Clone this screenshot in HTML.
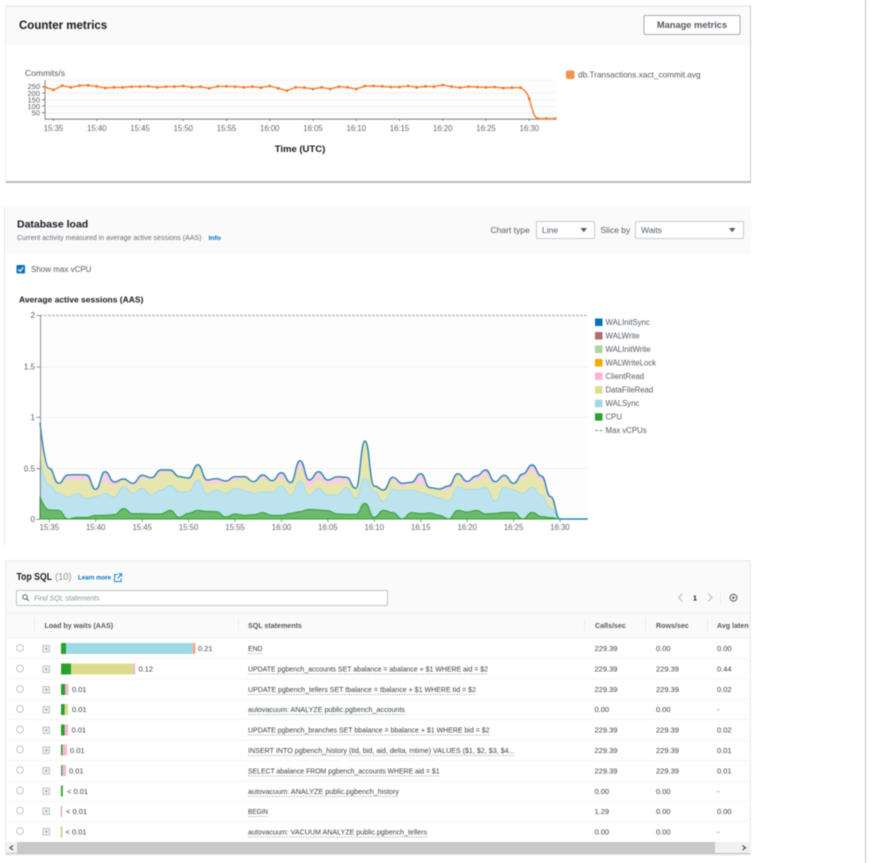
<!DOCTYPE html>
<html lang="en"><head><meta charset="utf-8"><title>Performance Insights</title>
<style>
html,body{margin:0;padding:0;background:#fff;width:869px;height:863px;overflow:hidden}
svg{display:block;position:absolute;left:0;top:0;filter:blur(.42px)}
text{font-family:"Liberation Sans",sans-serif;fill:#545b64;font-size:8px}
.b{font-weight:700;fill:#16191f}
.a{font-size:7.8px;text-anchor:middle;fill:#5f666e}
.l{font-size:7.8px;fill:#545b64}
.h{font-size:7.1px;font-weight:700;fill:#545b64}
.r{font-size:7.5px;fill:#3b4148}
.v{font-size:7.5px;fill:#3b4148}
.d{stroke:#879596;stroke-width:.7;stroke-dasharray:1.2 1.2}
.n{vector-effect:non-scaling-stroke}
</style></head><body>
<svg width="869" height="863" viewBox="0 0 869 863" xmlns="http://www.w3.org/2000/svg">
<defs><clipPath id="c"><rect x="700" y="615" width="49" height="20"/></clipPath></defs>
<rect x="865" y="0" width="1" height="863" fill="#c4c4c4"/>

<!-- Counter metrics -->
<rect x="5" y="5" width="746" height="178" fill="#eee"/>
<rect x="6" y="7" width="744" height="174" fill="#fff"/>
<rect x="6" y="7" width="744" height="38" fill="#fafafa"/>
<rect x="6" y="181" width="745" height="2" fill="#b4bcbf"/>
<rect x="750" y="6" width="1" height="176" fill="#c9cdcf"/>
<text x="19" y="29" class="b" style="font-size:11.5px">Counter metrics</text>
<rect x="644" y="15.500" width="96" height="19" rx="1" fill="#fff" stroke="#a3aeb4"/>
<text x="692" y="28" text-anchor="middle" style="font-size:9.300px;font-weight:700;fill:#545b64">Manage metrics</text>
<text x="25" y="76" style="font-size:8.500px;fill:#545b64">Commits/s</text>
<rect x="46" y="80" width="510" height="39" fill="#fdfdfd"/>
<g stroke="#efefef" stroke-width=".8"><path d="M46 80H555M46 93H555M46 100H555M46 106.500H555M46 113H555"/></g>
<g stroke="#666" stroke-width=".8"><path d="M45 80V119.500M45 119.200H556M42 86.500H45M42 93H45M42 99.700H45M42 106H45M42 112.700H45"/>
<path d="M53.500 119V121M96.750 119V121M140 119V121M183.250 119V121M226.500 119V121M269.750 119V121M313 119V121M356.250 119V121M399.500 119V121M442.750 119V121M486 119V121M529.250 119V121"/></g>
<g style="font-size:7.500px" text-anchor="end"><text x="40" y="89.200" style="font-size:7.500px">250</text><text x="40" y="95.800" style="font-size:7.500px">200</text><text x="40" y="102.400" style="font-size:7.500px">150</text><text x="40" y="108.800" style="font-size:7.500px">100</text><text x="40" y="115.400" style="font-size:7.500px">50</text></g>
<g><text class="a" x="53.500" y="131">15:35</text><text class="a" x="96.750" y="131">15:40</text><text class="a" x="140" y="131">15:45</text><text class="a" x="183.250" y="131">15:50</text><text class="a" x="226.500" y="131">15:55</text><text class="a" x="269.750" y="131">16:00</text><text class="a" x="313" y="131">16:05</text><text class="a" x="356.250" y="131">16:10</text><text class="a" x="399.500" y="131">16:15</text><text class="a" x="442.750" y="131">16:20</text><text class="a" x="486" y="131">16:25</text><text class="a" x="529.250" y="131">16:30</text></g>
<text x="300" y="152" text-anchor="middle" class="b" style="font-size:9.500px">Time (UTC)</text>
<g transform="translate(44.800,0) scale(8.650,.33333)">
<path class="n" fill="none" stroke="#f58536" stroke-width="1.500" d="M0,261L1,270 2,257 3,262 4,257 5,256 6,259 7,264 8,262 9,262 10,260 11,260 12,259 13,262 14,260 15,260 16,258 17,262 18,260 19,265 20,259 21,259 22,260 23,262 24,260 25,263 26,258 27,265 28,272 29,262 30,263 31,267 32,262 33,267 34,260 35,262 36,267 37,258 38,258 39,259 40,261 41,261 42,258 43,262 44,259 45,260 46,255 47,260 48,263 49,260 50,261 51,262 52,261 53,264 54,263 55,263 S55.700,270 56,296 56.500,352 57,356 L58,356 59,356"/>
<path class="n" fill="none" stroke="#f5792a" stroke-width="2.800" stroke-linecap="round" d="M0,261h0M1,270h0M2,257h0M3,262h0M4,257h0M5,256h0M6,259h0M7,264h0M8,262h0M9,262h0M10,260h0M11,260h0M12,259h0M13,262h0M14,260h0M15,260h0M16,258h0M17,262h0M18,260h0M19,265h0M20,259h0M21,259h0M22,260h0M23,262h0M24,260h0M25,263h0M26,258h0M27,265h0M28,272h0M29,262h0M30,263h0M31,267h0M32,262h0M33,267h0M34,260h0M35,262h0M36,267h0M37,258h0M38,258h0M39,259h0M40,261h0M41,261h0M42,258h0M43,262h0M44,259h0M45,260h0M46,255h0M47,260h0M48,263h0M49,260h0M50,261h0M51,262h0M52,261h0M53,264h0M54,263h0M55,263h0M56,296h0M57,356h0M58,356h0M59,356h0"/>
</g>
<rect x="566" y="70.500" width="8.500" height="8.500" rx="2" fill="#f4914f"/>
<text x="578" y="77.500" style="font-size:8.250px">db.Transactions.xact_commit.avg</text>

<!-- Database load -->
<rect x="4" y="207" width="1.300" height="338" fill="#e9ebec"/>
<rect x="5.500" y="207" width="745.500" height="47" fill="#fafafa"/>
<text x="17" y="227.500" class="b" style="font-size:10.500px">Database load</text>
<text x="17" y="240" style="font-size:7px;fill:#687078">Current activity measured in average active sessions (AAS)</text>
<text x="208.500" y="240" style="font-size:6.800px;font-weight:700;fill:#0073bb">Info</text>
<text x="490.500" y="233" style="font-size:8.500px">Chart type</text>
<rect x="536.500" y="221.500" width="58" height="17" rx="1" fill="#fff" stroke="#c5cdd0"/>
<text x="542" y="233" style="font-size:8.500px">Line</text>
<path d="M580.500 228H587L583.750 232.300Z" fill="#545b64"/>
<text x="600.500" y="233" style="font-size:8.500px">Slice by</text>
<rect x="635.500" y="221.500" width="108" height="17" rx="1" fill="#fff" stroke="#c5cdd0"/>
<text x="641" y="233" style="font-size:8.500px">Waits</text>
<path d="M729 228H735.500L732.250 232.300Z" fill="#545b64"/>
<rect x="16.500" y="265" width="8.500" height="8.500" rx="1" fill="#0b73b8"/>
<path d="M18.300 269.300L20.200 271.300L23.200 267.300" fill="none" stroke="#fff" stroke-width="1.200"/>
<text x="31" y="272" style="font-size:8px">Show max vCPU</text>
<text x="19" y="302.500" class="b" style="font-size:8.500px">Average active sessions (AAS)</text>

<rect x="41" y="316" width="547" height="203" fill="#fdfdfd"/>
<path d="M41 367H588M41 417.300H588M41 468.700H588" stroke="#f0f0f0" stroke-width=".8"/>
<g transform="translate(40,400) scale(9.285,.33333)">
<path fill="#f9cfe2" d="M0,357L0,68S.5,205 1,205 1.500,250 2,250 2.500,225 3,225 3.500,224 4,224 4.500,225 5,225 5.500,268 6,268 6.500,215 7,215 7.500,246 8,246 8.500,237 9,237 9.500,250 10,250 10.500,226 11,226 11.500,233 12,233 12.500,210 13,210 13.500,210 14,210 14.500,230 15,230 15.500,234 16,234 16.500,194 17,194 17.500,240 18,240 18.500,236 19,236 19.500,243 20,243 20.500,230 21,230 21.500,230 22,230 22.500,245 23,245 23.500,225 24,225 24.500,242 25,242 25.500,218 26,218 26.500,248 27,248 27.500,182 28,182 28.500,240 29,240 29.500,215 30,215 30.500,240 31,240 31.500,230 32,230 32.500,232 33,232 33.500,265 34,265 34.500,123 35,123 35.500,258 36,258 36.500,270 37,270 37.500,232 38,232 38.500,250 39,250 39.500,247 40,247 40.500,221 41,221 41.500,263 42,263 42.500,267 43,267 43.500,258 44,258 44.500,221 45,221 45.500,244 46,244 46.500,228 47,228 47.500,210 48,210 48.500,245 49,245 49.500,226 50,226 50.500,250 51,250 51.500,222 52,222 52.500,195 53,195 53.500,228 54,228 54.500,290 55,290 55.500,357 56,357Z"/>
<path fill="#e7e6ae" d="M0,357L0,100S.5,210 1,210 1.500,250 2,250 2.500,240 3,240 3.500,240 4,240 4.500,240 5,240 5.500,268 6,268 6.500,245 7,245 7.500,258 8,258 8.500,240 9,240 9.500,258 10,258 10.500,235 11,235 11.500,238 12,238 12.500,218 13,218 13.500,215 14,215 14.500,230 15,230 15.500,235 16,235 16.500,200 17,200 17.500,250 18,250 18.500,250 19,250 19.500,248 20,248 20.500,240 21,240 21.500,233 22,233 22.500,245 23,245 23.500,235 24,235 24.500,245 25,245 25.500,235 26,235 26.500,250 27,250 27.500,205 28,205 28.500,265 29,265 29.500,240 30,240 30.500,255 31,255 31.500,250 32,250 32.500,245 33,245 33.500,265 34,265 34.500,123 35,123 35.500,262 36,262 36.500,272 37,272 37.500,240 38,240 38.500,263 39,263 39.500,250 40,250 40.500,255 41,255 41.500,265 42,265 42.500,270 43,270 43.500,272 44,272 44.500,225 45,225 45.500,255 46,255 46.500,240 47,240 47.500,230 48,230 48.500,250 49,250 49.500,235 50,235 50.500,250 51,250 51.500,235 52,235 52.500,215 53,215 53.500,240 54,240 54.500,300 55,300 55.500,357 56,357Z"/>
<path fill="#bde3ee" stroke="#a9dbe8" stroke-width="1" class="n" d="M0,357L0,180S.5,255 1,255 1.500,280 2,280 2.500,292 3,292 3.500,282 4,282 4.500,295 5,295 5.500,290 6,290 6.500,280 7,280 7.500,292 8,292 8.500,260 9,260 9.500,280 10,280 10.500,265 11,265 11.500,285 12,285 12.500,270 13,270 13.500,256 14,256 14.500,276 15,276 15.500,275 16,275 16.500,240 17,240 17.500,282 18,282 18.500,270 19,270 19.500,280 20,280 20.500,265 21,265 21.500,272 22,272 22.500,280 23,280 23.500,276 24,276 24.500,276 25,276 25.500,258 26,258 26.500,285 27,285 27.500,243 28,243 28.500,285 29,285 29.500,265 30,265 30.500,285 31,285 31.500,285 32,285 32.500,262 33,262 33.500,295 34,295 34.500,235 35,235 35.500,275 36,275 36.500,305 37,305 37.500,268 38,268 38.500,272 39,272 39.500,270 40,270 40.500,278 41,278 41.500,285 42,285 42.500,295 43,295 43.500,303 44,303 44.500,260 45,260 45.500,268 46,268 46.500,268 47,268 47.500,262 48,262 48.500,303 49,303 49.500,262 50,262 50.500,270 51,270 51.500,280 52,280 52.500,262 53,262 53.500,285 54,285 54.500,325 55,325 55.500,357 56,357Z"/>
<path fill="#6cb96c" stroke="#2ca02c" stroke-width="1" class="n" d="M0,357L0,290S.5,330 1,330 1.500,331 2,331 2.500,357 3,357 3.500,352 4,352 4.500,352 5,352 5.500,346 6,346 6.500,346 7,346 7.500,344 8,344 8.500,326 9,326 9.500,341 10,341 10.500,341 11,341 11.500,342 12,342 12.500,342 13,342 13.500,331 14,331 14.500,352 15,352 15.500,340 16,340 16.500,331 17,331 17.500,334 18,334 18.500,335 19,335 19.500,351 20,351 20.500,342 21,342 21.500,346 22,346 22.500,344 23,344 23.500,338 24,338 24.500,346 25,346 25.500,346 26,346 26.500,340 27,340 27.500,335 28,335 28.500,328 29,328 29.500,330 30,330 30.500,332 31,332 31.500,342 32,342 32.500,343 33,343 33.500,343 34,343 34.500,310 35,310 35.500,352 36,352 36.500,331 37,331 37.500,338 38,338 38.500,357 39,357 39.500,338 40,338 40.500,341 41,341 41.500,339 42,339 42.500,346 43,346 43.500,357 44,357 44.500,331 45,331 45.500,336 46,336 46.500,331 47,331 47.500,342 48,342 48.500,340 49,340 49.500,337 50,337 50.500,337 51,337 51.500,357 52,357 52.500,337 53,337 53.500,350 54,350 54.500,353 55,353 55.500,357 56,357Z"/>
<path fill="none" stroke="#2c85b8" stroke-width="1.400" class="n" d="M0,68S.5,205 1,205 1.500,250 2,250 2.500,225 3,225 3.500,224 4,224 4.500,225 5,225 5.500,268 6,268 6.500,215 7,215 7.500,246 8,246 8.500,237 9,237 9.500,250 10,250 10.500,226 11,226 11.500,233 12,233 12.500,210 13,210 13.500,210 14,210 14.500,230 15,230 15.500,234 16,234 16.500,194 17,194 17.500,240 18,240 18.500,236 19,236 19.500,243 20,243 20.500,230 21,230 21.500,230 22,230 22.500,245 23,245 23.500,225 24,225 24.500,242 25,242 25.500,218 26,218 26.500,248 27,248 27.500,182 28,182 28.500,240 29,240 29.500,215 30,215 30.500,240 31,240 31.500,230 32,230 32.500,232 33,232 33.500,265 34,265 34.500,123 35,123 35.500,258 36,258 36.500,270 37,270 37.500,232 38,232 38.500,250 39,250 39.500,247 40,247 40.500,221 41,221 41.500,263 42,263 42.500,267 43,267 43.500,258 44,258 44.500,221 45,221 45.500,244 46,244 46.500,228 47,228 47.500,210 48,210 48.500,245 49,245 49.500,226 50,226 50.500,250 51,250 51.500,222 52,222 52.500,195 53,195 53.500,228 54,228 54.500,290 55,290 55.500,357 56,357L59,357"/>
</g>
<path d="M40 315.500H588" stroke="#808080" stroke-width=".8" stroke-dasharray="2.500 1.500"/>
<g stroke="#777" stroke-width=".8" fill="none"><path d="M40.500 315V519.500M36.500 315.500H40.500M36.500 367H40.500M36.500 417.300H40.500M36.500 468.700H40.500M36.500 519.300H40.500"/>
<path d="M49.300 519V522M95.700 519V522M142.200 519V522M188.600 519V522M235 519V522M281.500 519V522M327.900 519V522M374.300 519V522M420.800 519V522M467.200 519V522M513.600 519V522M560 519V522"/></g>
<g text-anchor="end"><text x="35" y="318">2</text><text x="35" y="369.500">1.5</text><text x="35" y="420">1</text><text x="35" y="471.500">0.5</text><text x="35" y="522">0</text></g>
<g><text class="a" x="49.300" y="530">15:35</text><text class="a" x="95.700" y="530">15:40</text><text class="a" x="142.200" y="530">15:45</text><text class="a" x="188.600" y="530">15:50</text><text class="a" x="235" y="530">15:55</text><text class="a" x="281.500" y="530">16:00</text><text class="a" x="327.900" y="530">16:05</text><text class="a" x="374.300" y="530">16:10</text><text class="a" x="420.800" y="530">16:15</text><text class="a" x="467.200" y="530">16:20</text><text class="a" x="513.600" y="530">16:25</text><text class="a" x="560" y="530">16:30</text></g>
<g>
<rect x="595" y="318.500" width="7.500" height="7.500" fill="#0073bb"/><text class="l" x="605.500" y="325">WALInitSync</text>
<rect x="595" y="332" width="7.500" height="7.500" fill="#b56a6f"/><text class="l" x="605.500" y="338.500">WALWrite</text>
<rect x="595" y="345.500" width="7.500" height="7.500" fill="#a8d5a0"/><text class="l" x="605.500" y="352">WALInitWrite</text>
<rect x="595" y="359" width="7.500" height="7.500" fill="#f2a900"/><text class="l" x="605.500" y="365.500">WALWriteLock</text>
<rect x="595" y="372.600" width="7.500" height="7.500" fill="#f9b5d2"/><text class="l" x="605.500" y="379">ClientRead</text>
<rect x="595" y="386.100" width="7.500" height="7.500" fill="#dcdc8f"/><text class="l" x="605.500" y="392.600">DataFileRead</text>
<rect x="595" y="399.700" width="7.500" height="7.500" fill="#9fd8e6"/><text class="l" x="605.500" y="406.100">WALSync</text>
<rect x="595" y="413.200" width="7.500" height="7.500" fill="#2ca02c"/><text class="l" x="605.500" y="419.700">CPU</text>
<path d="M595 430.500H603" stroke="#666" stroke-width=".8" stroke-dasharray="3 1.500"/><text class="l" x="605.500" y="433">Max vCPUs</text>
</g>

<!-- Top SQL -->
<rect x="5" y="560" width="746" height="295.500" fill="#eee"/>
<rect x="6.500" y="561.500" width="743" height="76.500" fill="#fafafa"/>
<rect x="6.500" y="638" width="743" height="204" fill="#fff"/>
<text x="16.500" y="580" class="b" style="font-size:10.300px" textLength="35.500" lengthAdjust="spacingAndGlyphs">Top SQL</text>
<text x="55" y="580" style="font-size:10.300px;fill:#879596" textLength="16.500" lengthAdjust="spacingAndGlyphs">(10)</text>
<text x="78" y="579.500" style="font-size:6px;font-weight:700;fill:#0073bb" textLength="33" lengthAdjust="spacingAndGlyphs">Learn more</text>
<path d="M117.500 574.500H114.500V581.500H121V578.500M117.500 578.500L121 574.500M118.500 573.800H121.500V576.800" fill="none" stroke="#1a86c8" stroke-width="1"/>
<rect x="16.500" y="590.500" width="371" height="15" rx="1" fill="#fff" stroke="#aab7b8" stroke-width=".8"/>
<circle cx="25" cy="597" r="2.200" fill="none" stroke="#545b64"/><path d="M26.600 598.600L28.800 601" stroke="#545b64"/>
<text x="34" y="600.500" style="font-size:7px;font-style:italic;fill:#879596">Find SQL statements</text>
<path d="M682.500 593.500L678.500 597.500L682.500 601.500M708 593.500L712 597.500L708 601.500" fill="none" stroke="#aab7b8" stroke-width=".9"/>
<text x="695" y="600.500" text-anchor="middle" class="b" style="font-size:7.500px">1</text>
<path d="M720.500 591V604" stroke="#eaeded"/>
<circle cx="733.500" cy="597.700" r="3.400" fill="none" stroke="#545b64" stroke-width="1"/><circle cx="733.500" cy="597.700" r="1.200" fill="#545b64"/>
<path d="M6.500 613H749.500M6.500 638H749.500" stroke="#eef0f0" stroke-width=".8"/>
<path d="M34.500 618V632M238.500 618V632M584.500 618V632M645.500 618V632M707.500 618V632" stroke="#e8eaea" stroke-width=".8"/>
<text class="h" x="44.500" y="628">Load by waits (AAS)</text><text class="h" x="248" y="628">SQL statements</text><text class="h" x="595" y="628">Calls/sec</text><text class="h" x="656" y="628">Rows/sec</text>
<g clip-path="url(#c)"><text class="h" x="717" y="628">Avg latency</text></g>
<path d="M6.500 658.500H749.500M6.500 679H749.500M6.500 699.500H749.500M6.500 719.500H749.500M6.500 740.500H749.500M6.500 760.500H749.500M6.500 781H749.500M6.500 801.500H749.500M6.500 821.500H749.500" stroke="#f0f1f1" stroke-width=".8"/>
<g fill="#fff" stroke="#aab7b8" stroke-width=".8">
<circle cx="20" cy="648" r="3.400"/><circle cx="20" cy="668.500" r="3.400"/><circle cx="20" cy="689" r="3.400"/><circle cx="20" cy="709" r="3.400"/><circle cx="20" cy="729.500" r="3.400"/><circle cx="20" cy="749.500" r="3.400"/><circle cx="20" cy="770" r="3.400"/><circle cx="20" cy="790.500" r="3.400"/><circle cx="20" cy="810.500" r="3.400"/><circle cx="20" cy="831" r="3.400"/></g>
<g fill="#f2f3f3" stroke="#aab7b8" stroke-width=".8">
<rect x="43" y="645.500" width="6.500" height="6.500"/><rect x="43" y="666" width="6.500" height="6.500"/><rect x="43" y="686.500" width="6.500" height="6.500"/><rect x="43" y="706.500" width="6.500" height="6.500"/><rect x="43" y="727" width="6.500" height="6.500"/><rect x="43" y="747" width="6.500" height="6.500"/><rect x="43" y="767.500" width="6.500" height="6.500"/><rect x="43" y="788" width="6.500" height="6.500"/><rect x="43" y="808" width="6.500" height="6.500"/><rect x="43" y="828.500" width="6.500" height="6.500"/></g>
<path d="M44.800 648.700H47.800M46.300 647.200V650.200M44.800 669.200H47.800M46.300 667.700V670.700M44.800 689.700H47.800M46.300 688.200V691.200M44.800 709.700H47.800M46.300 708.200V711.200M44.800 730.200H47.800M46.300 728.700V731.700M44.800 750.200H47.800M46.300 748.700V751.700M44.800 770.700H47.800M46.300 769.200V772.200M44.800 791.200H47.800M46.300 789.700V792.700M44.800 811.200H47.800M46.300 809.700V812.700M44.800 831.700H47.800M46.300 830.200V833.200" stroke="#879596" stroke-width=".7"/>
<!-- bars -->
<rect x="61" y="643" width="5" height="11" fill="#2ca02c"/><rect x="66" y="643" width="126" height="11" fill="#9fd8e6"/><rect x="192" y="643" width="1.500" height="11" fill="#f9b5d2"/><rect x="193.500" y="643" width="1.800" height="11" fill="#e8a868"/>
<rect x="61" y="663.500" width="10" height="11" fill="#2ca02c"/><rect x="71" y="663.500" width="62" height="11" fill="#dcdc8f"/><rect x="133" y="663.500" width="2.200" height="11" fill="#f9b5d2"/>
<rect x="61" y="684" width="4.300" height="11" fill="#2ca02c"/><rect x="65.300" y="684" width="3.300" height="11" fill="#f9b5d2"/>
<rect x="61" y="704" width="3.800" height="11" fill="#2ca02c"/><rect x="64.800" y="704" width="3.300" height="11" fill="#dcdc8f"/>
<rect x="61" y="724.500" width="3.800" height="11" fill="#2ca02c"/><rect x="64.800" y="724.500" width="3.400" height="11" fill="#f9b5d2"/>
<rect x="61" y="744.500" width="1.700" height="11" fill="#2ca02c"/><rect x="62.700" y="744.500" width="4.300" height="11" fill="#f9b5d2"/>
<rect x="61" y="765" width="1.500" height="11" fill="#5aa86a"/><rect x="62.500" y="765" width="3.500" height="11" fill="#f2b4cf"/>
<rect x="61" y="785.500" width="1.800" height="11" fill="#2ca02c"/>
<rect x="61" y="806" width="1" height="11" fill="#c09a9c"/>
<rect x="61" y="826.500" width="1" height="11" fill="#a8ad50"/>
<g>
<text class="v" x="198" y="651">0.21</text><text class="v" x="138.500" y="671.500">0.12</text><text class="v" x="72" y="692">0.01</text><text class="v" x="72" y="712">0.01</text><text class="v" x="71.500" y="732.500">0.01</text><text class="v" x="70" y="753">0.01</text><text class="v" x="69" y="773.500">0.01</text><text class="v" x="67" y="794">&lt; 0.01</text><text class="v" x="66" y="814">&lt; 0.01</text><text class="v" x="65.500" y="834.500">&lt; 0.01</text>
</g>
<g lengthAdjust="spacingAndGlyphs">
<text class="r" x="248" y="651" textLength="14.500" lengthAdjust="spacingAndGlyphs">END</text>
<text class="r" x="248" y="671.500" textLength="240" lengthAdjust="spacingAndGlyphs">UPDATE pgbench_accounts SET abalance = abalance + $1 WHERE aid = $2</text>
<text class="r" x="248" y="692" textLength="228" lengthAdjust="spacingAndGlyphs">UPDATE pgbench_tellers SET tbalance = tbalance + $1 WHERE tid = $2</text>
<text class="r" x="248" y="712" textLength="157" lengthAdjust="spacingAndGlyphs">autovacuum: ANALYZE public.pgbench_accounts</text>
<text class="r" x="248" y="732.500" textLength="241.500" lengthAdjust="spacingAndGlyphs">UPDATE pgbench_branches SET bbalance = bbalance + $1 WHERE bid = $2</text>
<text class="r" x="248" y="753" textLength="266.500" lengthAdjust="spacingAndGlyphs">INSERT INTO pgbench_history (tid, bid, aid, delta, mtime) VALUES ($1, $2, $3, $4...</text>
<text class="r" x="248" y="773.500" textLength="191.500" lengthAdjust="spacingAndGlyphs">SELECT abalance FROM pgbench_accounts WHERE aid = $1</text>
<text class="r" x="248" y="794" textLength="151" lengthAdjust="spacingAndGlyphs">autovacuum: ANALYZE public.pgbench_history</text>
<text class="r" x="248" y="814" textLength="20" lengthAdjust="spacingAndGlyphs">BEGIN</text>
<text class="r" x="248" y="834.500" textLength="179" lengthAdjust="spacingAndGlyphs">autovacuum: VACUUM ANALYZE public.pgbench_tellers</text>
</g>
<path class="d" d="M248 653.500H262.500M248 674H488M248 694.500H476M248 714.500H405M248 735H489.500M248 755.500H514.500M248 776H439.500M248 796.500H399M248 816.500H268M248 837H427"/>
<g>
<text class="v" x="594.500" y="651">229.39</text><text class="v" x="656" y="651">0.00</text><text class="v" x="717" y="651">0.00</text>
<text class="v" x="594.500" y="671.500">229.39</text><text class="v" x="656" y="671.500">229.39</text><text class="v" x="717" y="671.500">0.44</text>
<text class="v" x="594.500" y="692">229.39</text><text class="v" x="656" y="692">229.39</text><text class="v" x="717" y="692">0.02</text>
<text class="v" x="594.500" y="712">0.00</text><text class="v" x="656" y="712">0.00</text><text class="v" x="717" y="712">-</text>
<text class="v" x="594.500" y="732.500">229.39</text><text class="v" x="656" y="732.500">229.39</text><text class="v" x="717" y="732.500">0.02</text>
<text class="v" x="594.500" y="753">229.39</text><text class="v" x="656" y="753">229.39</text><text class="v" x="717" y="753">0.01</text>
<text class="v" x="594.500" y="773.500">229.39</text><text class="v" x="656" y="773.500">229.39</text><text class="v" x="717" y="773.500">0.01</text>
<text class="v" x="594.500" y="794">0.00</text><text class="v" x="656" y="794">0.00</text><text class="v" x="717" y="794">-</text>
<text class="v" x="594.500" y="814">1.29</text><text class="v" x="656" y="814">0.00</text><text class="v" x="717" y="814">0.00</text>
<text class="v" x="594.500" y="834.500">0.00</text><text class="v" x="656" y="834.500">0.00</text><text class="v" x="717" y="834.500">-</text>
</g>
<rect x="6.500" y="842" width="743" height="11" fill="#f1f1f1"/>
<rect x="17" y="842" width="698" height="11" fill="#c9c9c9"/>
<rect x="6.500" y="853" width="743" height="1" fill="#b9c0c2"/>
<path d="M13 845.500L10 847.800L13 850M742.500 845.500L745.500 847.800L742.500 850" fill="none" stroke="#505050" stroke-width="1.200"/>
</svg>
</body></html>
